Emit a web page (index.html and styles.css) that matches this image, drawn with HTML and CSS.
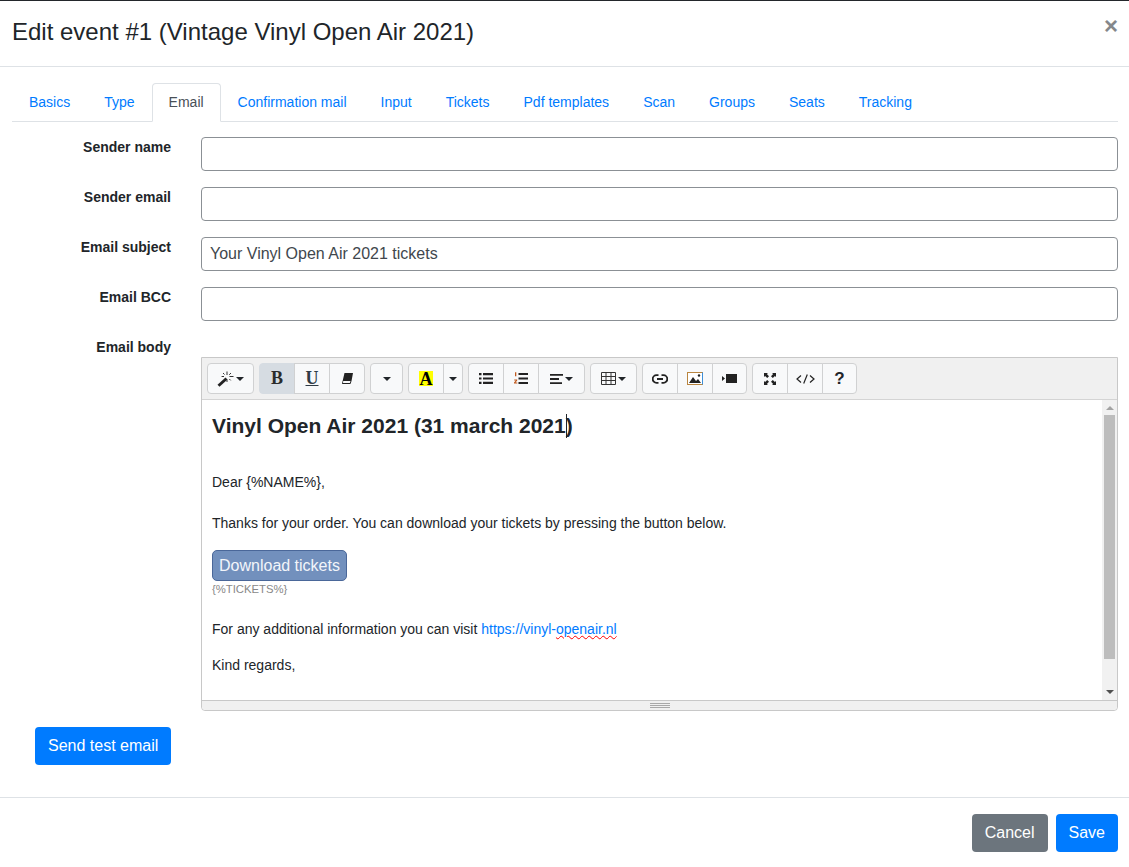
FILE: index.html
```html
<!DOCTYPE html>
<html lang="en">
<head>
    <meta charset="UTF-8">
    <title>Edit event</title>
    <link rel="stylesheet" href="styles.css">
</head>
<body>
    <div class="modal">
        <!-- Header -->
        <div class="modal-header">
            <h4 class="modal-title">Edit event #1 (Vintage Vinyl Open Air 2021)</h4>
            <span class="close">&times;</span>
        </div>

        <div class="modal-body">
            <!-- Tabs -->
            <ul class="tabs">
                <li><a href="#">Basics</a></li>
                <li><a href="#">Type</a></li>
                <li><a href="#" class="active">Email</a></li>
                <li><a href="#">Confirmation mail</a></li>
                <li><a href="#">Input</a></li>
                <li><a href="#">Tickets</a></li>
                <li><a href="#">Pdf templates</a></li>
                <li><a href="#">Scan</a></li>
                <li><a href="#">Groups</a></li>
                <li><a href="#">Seats</a></li>
                <li><a href="#">Tracking</a></li>
            </ul>

            <!-- Form -->
            <div class="form-row">
                <label for="senderName">Sender name</label>
                <input type="text" id="senderName">
            </div>
            <div class="form-row">
                <label for="senderEmail">Sender email</label>
                <input type="text" id="senderEmail">
            </div>
            <div class="form-row">
                <label for="subject">Email subject</label>
                <input type="text" id="subject" value="Your Vinyl Open Air 2021 tickets">
            </div>
            <div class="form-row">
                <label for="bcc">Email BCC</label>
                <input type="text" id="bcc">
            </div>

            <div class="form-row">
                <label>Email body</label>

                <!-- Editor -->
                <div class="editor">
                    <div class="toolbar">
                        <div class="btn-group">
                            <button class="tool w47">
                                <svg width="17" height="16" viewBox="0 0 17 16"><path d="M.5 13.700 8.500 6.500l2 2-8 7.200z" fill="#222"/><path d="M10 .5v3.500M10 8.500v2.500M4.600 5.500h2.400M12.500 5.500H16.500M6 2l1.500 1.500M14 2l-1.800 1.800M12.300 8l1.400 1.400" stroke="#333" stroke-width="1" fill="none"/></svg>
                                <i class="caret"></i>
                            </button>
                        </div>
                        <div class="btn-group">
                            <button class="tool w36 pressed"><span class="glyph-b">B</span></button>
                            <button class="tool w36"><span class="glyph-u">U</span></button>
                            <button class="tool w36">
                                <svg width="11" height="11" viewBox="0 0 11 11"><path d="M2.500 0H11L9.500 8 8.700 10.500a.7.7 0 0 1-.7.500H.8a.7.7 0 0 1-.7-.8z" fill="#222"/><path d="M1.200 8h7.300l-.6 2H1z" fill="#f8f9fa"/></svg>
                            </button>
                        </div>
                        <div class="btn-group">
                            <button class="tool w33"><i class="caret"></i></button>
                        </div>
                        <div class="btn-group">
                            <button class="tool w36"><span class="glyph-a">A</span></button>
                            <button class="tool w20"><i class="caret"></i></button>
                        </div>
                        <div class="btn-group">
                            <button class="tool w36">
                                <svg width="14" height="11" viewBox="0 0 14 11"><path d="M0 0h2.500v2.200H0zM0 4.400h2.500v2.200H0zM0 8.800h2.500V11H0zM4 0h10v2.200H4zM4 4.400h10v2.200H4zM4 8.800h10V11H4z" fill="#222"/></svg>
                            </button>
                            <button class="tool w36">
                                <svg width="14" height="13" viewBox="0 0 14 13"><path d="M4.500 1h9.500v2H4.500zM4.500 5.500H14v2H4.500zM4.500 10H14v2H4.500z" fill="#222"/><path d="M1 .3h1.300v4H1zM.2 7.500h3v1.100L1.600 10.400h1.700V11.500H0v-1l1.800-1.900H.2z" fill="#c05a1e"/></svg>
                            </button>
                            <button class="tool w47">
                                <svg width="13" height="10" viewBox="0 0 13 10"><path d="M0 0h13v1.800H0zM0 4.100h9v1.800H0zM0 8.200h12V10H0z" fill="#222"/></svg>
                                <i class="caret"></i>
                            </button>
                        </div>
                        <div class="btn-group">
                            <button class="tool w47">
                                <svg width="15" height="13" viewBox="0 0 15 13"><path d="M.5.500h14v12H.5zM.5 4.500h14M.5 8.500h14M5 .500v12M10 .500v12" fill="none" stroke="#333" stroke-width="1"/></svg>
                                <i class="caret"></i>
                            </button>
                        </div>
                        <div class="btn-group">
                            <button class="tool w36">
                                <svg width="16" height="10" viewBox="0 0 16 10"><path d="M6.500 1.200H4.500a3.800 3.800 0 0 0 0 7.600h2M9.500 1.200h2a3.800 3.800 0 0 1 0 7.600h-2M5 5h6" fill="none" stroke="#222" stroke-width="1.800"/></svg>
                            </button>
                            <button class="tool w36">
                                <svg width="16" height="13" viewBox="0 0 16 13"><rect x=".5" y=".5" width="15" height="12" fill="#fff" stroke="#b9853f"/><path d="M15.500 .5v12" stroke="#3d8fd8"/><path d="M2 11 6 5l3 4 2-2 3 4z" fill="#222"/><circle cx="12" cy="3.500" r="1.200" fill="#222"/></svg>
                            </button>
                            <button class="tool w35">
                                <svg width="15" height="9" viewBox="0 0 15 9"><path d="M4 0h11v9H4zM0 2 3 4.500 0 7z" fill="#222"/></svg>
                            </button>
                        </div>
                        <div class="btn-group">
                            <button class="tool w36">
                                <svg width="12" height="12" viewBox="0 0 12 12"><path d="M0 0h4L2.900 1.100 5 3.200 3.200 5 1.100 2.900 0 4zM12 0v4L10.900 2.900 8.800 5 7 3.200 9.100 1.100 8 0zM0 12V8l1.100 1.100L3.200 7 5 8.800 2.900 10.900 4 12zM12 12H8l1.100-1.100L7 8.800 8.800 7l2.100 2.100L12 8z" fill="#222"/></svg>
                            </button>
                            <button class="tool w36">
                                <svg width="19" height="10" viewBox="0 0 19 10"><path d="M5 1.500 1 5l4 3.500M14 1.500 18 5l-4 3.500M11.300.5 7.700 9.500" fill="none" stroke="#222" stroke-width="1.200"/></svg>
                            </button>
                            <button class="tool w35"><span class="glyph-help">?</span></button>
                        </div>
                    </div>

                    <div class="editor-main">
                        <div class="editable">
                            <h3>Vinyl Open Air 2021 (31 march 2021<span class="text-cursor"></span>)</h3>
                            <p class="dear">Dear {%NAME%},</p>
                            <p class="thanks">Thanks for your order. You can download your tickets by pressing the button below.</p>
                            <a href="#" class="download">Download tickets</a>
                            <p class="tag">{%TICKETS%}</p>
                            <p class="visit">For any additional information you can visit <a href="#">https://vinyl-<span class="misspelled">openair.nl</span></a></p>
                            <p class="regards">Kind regards,</p>
                        </div>
                        <div class="scrollbar">
                            <span class="arrow-up"></span>
                            <div class="thumb"></div>
                            <span class="arrow-down"></span>
                        </div>
                    </div>

                    <div class="resizebar"><span class="grip"></span></div>
                </div>
            </div>

            <div class="test-row">
                <button class="btn btn-primary">Send test email</button>
            </div>
        </div>

        <!-- Footer -->
        <div class="modal-footer">
            <button class="btn btn-secondary">Cancel</button>
            <button class="btn btn-primary">Save</button>
        </div>
    </div>
</body>
</html>
```

FILE: styles.css
```css
/* Global Styles */
* {
    box-sizing: border-box;
}

body {
    margin: 0;
    font-family: "Liberation Sans", Arial, sans-serif;
    font-size: 16px;
    color: #212529;
    background: #fff;
}

.modal {
    border-top: 1px solid #23272b;
    height: 867px;
    overflow: hidden;
}

/* Header */
.modal-header {
    height: 66px;
    padding: 0 11px 0 12px;
    display: flex;
    justify-content: space-between;
    align-items: flex-start;
    border-bottom: 1px solid #dee2e6;
}

.modal-title {
    margin: 15px 0 0;
    font-size: 24px;
    font-weight: 400;
    line-height: 32px;
}

.close {
    margin-top: 7px;
    font-size: 24px;
    font-weight: 700;
    line-height: 36px;
    color: #85888b;
}

.modal-body {
    padding: 16px 11px 0 12px;
}

/* Tabs */
.tabs {
    display: flex;
    margin: 0 0 15px;
    padding: 0;
    list-style: none;
    border-bottom: 1px solid #dee2e6;
    font-size: 14px;
}

.tabs a {
    display: block;
    height: 39px;
    margin-bottom: -1px;
    padding: 10px 16px 0;
    line-height: 17px;
    color: #007bff;
    text-decoration: none;
    border: 1px solid transparent;
    border-radius: 4px 4px 0 0;
}

.tabs a.active {
    color: #495057;
    background: #fff;
    border-color: #dee2e6 #dee2e6 #fff;
}

/* Form rows */
.form-row {
    display: grid;
    grid-template-columns: 159px 1fr;
    column-gap: 30px;
    margin-bottom: 16px;
}

.form-row label {
    padding-top: 2px;
    font-size: 14px;
    font-weight: 700;
    line-height: 17px;
    text-align: right;
}

.form-row input {
    width: 100%;
    height: 34px;
    padding: 0 8px;
    font-family: inherit;
    font-size: 16px;
    color: #41474d;
    border: 1px solid #8b9095;
    border-radius: 4px;
    outline: none;
}

/* Editor */
.editor {
    height: 354px;
    margin-top: 20px;
    border: 1px solid #c8c8c8;
    border-radius: 0 0 4px 4px;
}

.toolbar {
    display: flex;
    gap: 5px;
    height: 42px;
    padding: 5px 5px 0;
    background: #f0f0f0;
    border-bottom: 1px solid #d4d4d4;
}

.btn-group {
    display: flex;
}

.tool {
    display: flex;
    align-items: center;
    justify-content: center;
    gap: 2px;
    height: 31px;
    margin-left: -1px;
    padding: 0;
    background: #f8f9fa;
    border: 1px solid #d0d1d2;
    font-family: "Liberation Serif", serif;
    color: #212529;
}

.btn-group .tool:first-child {
    margin-left: 0;
    border-radius: 4px 0 0 4px;
}

.btn-group .tool:last-child {
    border-radius: 0 4px 4px 0;
}

.btn-group .tool:only-child {
    border-radius: 4px;
}

.tool.pressed {
    background: #d6dce2;
    border-color: #d6dce2;
}

.w20 { width: 20px; }
.w33 { width: 33px; }
.w35 { width: 35px; }
.w36 { width: 36px; }
.w47 { width: 47px; }

.caret {
    display: block;
    width: 0;
    height: 0;
    border-top: 4px solid #212529;
    border-left: 4px solid transparent;
    border-right: 4px solid transparent;
}

.glyph-b,
.glyph-u,
.glyph-a {
    font-size: 18px;
    font-weight: 700;
    line-height: 17px;
}

.glyph-b {
    color: #2b2b2b;
}

.glyph-u {
    color: #2f3b45;
    text-decoration: underline;
    text-underline-offset: 1px;
}

.glyph-a {
    display: block;
    width: 14px;
    height: 15px;
    text-align: center;
    background: #ff0;
    color: #000;
    line-height: 16px;
}

.glyph-help {
    font-family: "Liberation Sans", Arial, sans-serif;
    font-size: 17px;
    font-weight: 700;
}

.editor-main {
    display: flex;
    height: 301px;
    border-bottom: 1px solid #c8c8c8;
}

.editable {
    flex: 1;
    padding: 0 10px;
    overflow: hidden;
    font-size: 14px;
    line-height: 20px;
}

.editable h3 {
    margin: 13px 0 0;
    font-size: 21px;
    font-weight: 700;
    line-height: 25px;
}

.text-cursor {
    display: inline-block;
    width: 1px;
    height: 24px;
    margin: 0 -1px -5px 0;
    background: #212529;
}

.editable p {
    margin: 0;
}

.editable a {
    color: #007bff;
    text-decoration: none;
}

.editable .dear {
    margin-top: 34px;
}

.editable .thanks {
    margin-top: 21px;
}

.editable .download {
    display: block;
    width: 135px;
    height: 31px;
    margin-top: 17px;
    font-size: 16px;
    line-height: 29px;
    text-align: center;
    color: #f2f5fa;
    background: #7290bd;
    border: 1px solid #4a6799;
    border-radius: 5px;
}

.editable .tag {
    margin-top: 1px;
    font-size: 11.3px;
    line-height: 14px;
    color: #888;
}

.editable .visit {
    margin-top: 23px;
}

.editable .regards {
    margin-top: 16px;
}

.misspelled {
    text-decoration: underline wavy #f00 1px;
    text-underline-offset: 1px;
}

/* Fake scrollbar, the frame shows it at a fixed thumb position */
.scrollbar {
    flex: none;
    display: flex;
    flex-direction: column;
    align-items: center;
    width: 15px;
    background: #f1f1f1;
}

.thumb {
    width: 11px;
    height: 244px;
    margin-top: 5px;
    background: #bdbdbd;
}

.arrow-up,
.arrow-down {
    display: block;
    width: 0;
    height: 0;
    border-left: 4px solid transparent;
    border-right: 4px solid transparent;
}

.arrow-up {
    margin-top: 6px;
    border-bottom: 4px solid #a3a3a3;
}

.arrow-down {
    margin-top: 31px;
    border-top: 4px solid #505050;
}

.resizebar {
    display: flex;
    justify-content: center;
    align-items: center;
    height: 9px;
    background: #f0f0f0;
    border-radius: 0 0 4px 4px;
}

.grip {
    display: block;
    width: 20px;
    height: 5px;
    border-top: 1px solid #a8a8a8;
    border-bottom: 1px solid #a8a8a8;
    background: linear-gradient(#f0f0f0 1px, #a8a8a8 1px, #a8a8a8 2px, #f0f0f0 2px);
}

/* Buttons */
.test-row {
    padding-left: 23px;
}

.btn {
    font-family: inherit;
    font-size: 16px;
    line-height: 24px;
    padding: 6px 12px;
    color: #fff;
    border: 1px solid transparent;
    border-radius: 4px;
}

.btn-primary {
    background: #007bff;
}

.btn-secondary {
    background: #6c757d;
}

/* Footer */
.modal-footer {
    display: flex;
    justify-content: flex-end;
    gap: 8px;
    margin-top: 32px;
    padding: 16px 11px 0 0;
    border-top: 1px solid #dee2e6;
}
```
